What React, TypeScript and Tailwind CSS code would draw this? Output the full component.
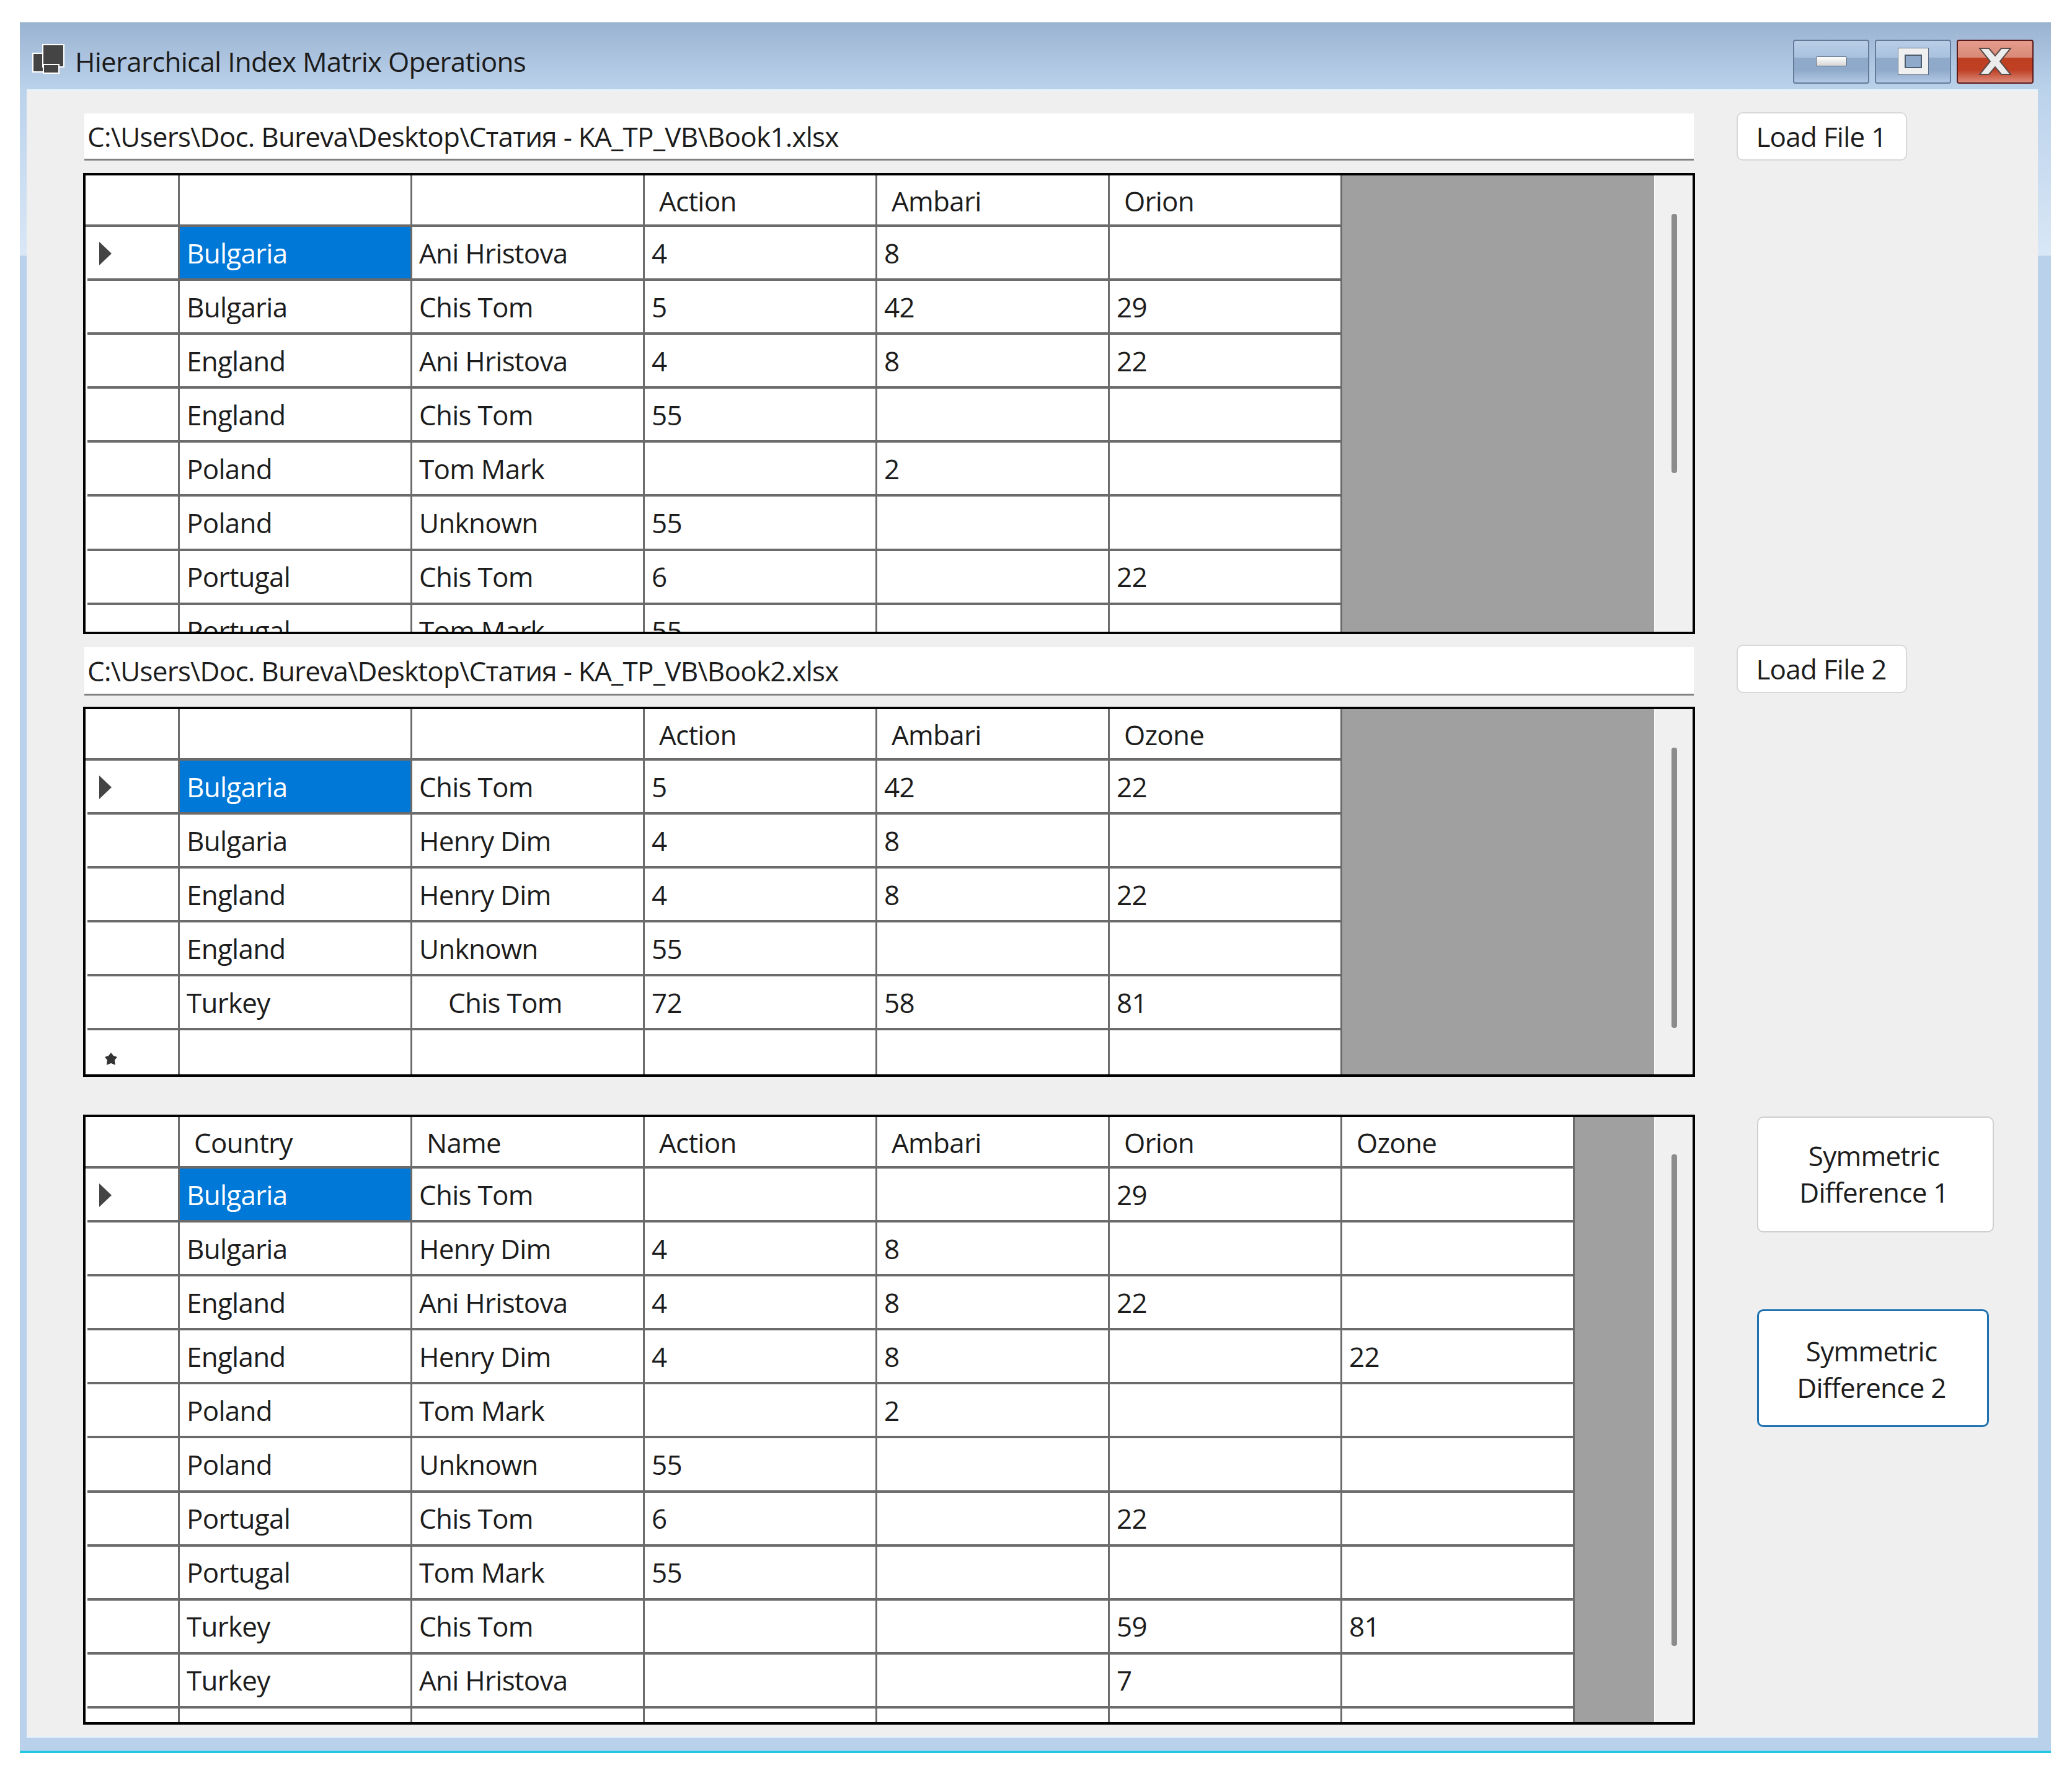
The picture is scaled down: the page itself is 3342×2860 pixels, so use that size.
const rowH = "h-[87.1px]";

type GridProps = {
  headers: string[];
  rows: string[][];
  height: string;
  thumbTop: string;
  thumbHeight: string;
  newRow?: boolean;
};

function DataGrid({ headers, rows, height, thumbTop, thumbHeight, newRow }: GridProps) {
  return (
    <div className={`flex w-[2600px] overflow-hidden border-4 border-black bg-white ${height}`}>
      <div className="flex flex-col shrink-0">
        <div className="flex h-[83px] shrink-0">
          <div className="w-[152px] shrink-0 border-r-[3px] border-b-4 border-[#6b6b6b]" />
          {headers.map((h, i) => (
            <div
              key={i}
              className="flex w-[375px] shrink-0 items-center border-r-[3px] border-b-4 border-[#6b6b6b] pt-[3px] pl-[23px]"
            >
              {h}
            </div>
          ))}
        </div>
        {rows.map((row, r) => (
          <div key={r} className={`flex shrink-0 ${rowH}`}>
            <div className="w-[152px] shrink-0 pl-[3px]">
              <div className="flex h-full items-center border-r-[3px] border-b-4 border-[#6b6b6b] pt-[3px] pl-[19px]">
                {r === 0 && (
                  <svg width="20" height="38" viewBox="0 0 20 38">
                    <polygon points="0,0 20,19 0,38" fill="#444444" />
                  </svg>
                )}
              </div>
            </div>
            {row.map((c, i) => (
              <div
                key={i}
                className={
                  r === 0 && i === 0
                    ? "flex w-[375px] shrink-0 items-center border-r-[3px] border-b-4 border-[#6b6b6b] bg-[#0078d7] pl-[11px] text-white"
                    : c === "Chis Tom "
                    ? "flex w-[375px] shrink-0 items-center border-r-[3px] border-b-4 border-[#6b6b6b] pl-[58px]"
                    : "flex w-[375px] shrink-0 items-center border-r-[3px] border-b-4 border-[#6b6b6b] pl-[11px]"
                }
              >
                {c}
              </div>
            ))}
          </div>
        ))}
        {newRow && (
          <div className={`flex shrink-0 ${rowH}`}>
            <div className="w-[152px] shrink-0 pl-[3px]">
              <div className="flex h-full items-center border-r-[3px] border-[#6b6b6b] pt-[4px] pl-[28px]">
                <svg width="20" height="20" viewBox="0 0 20 20">
                  <polygon points="10,0 14,5 20,7 16,12 17,20 10,17 3,20 4,12 0,7 6,5" fill="#333333" />
                </svg>
              </div>
            </div>
            {headers.map((_, i) => (
              <div key={i} className="w-[375px] shrink-0 border-r-[3px] border-[#6b6b6b]" />
            ))}
          </div>
        )}
      </div>
      <div className="flex-1 bg-[#a0a0a0]" />
      <div className="w-[62px] shrink-0 border-l-2 border-[#f8f8f8] bg-[#f0f0f0]">
        <div className={`ml-[26px] w-[9px] rounded-sm bg-[#8c8c8c] ${thumbTop} ${thumbHeight}`} />
      </div>
    </div>
  );
}

function PathBox({ text, cls }: { text: string; cls: string }) {
  return (
    <div className={`ml-[2px] flex w-[2596px] items-center self-end border-b-[3px] border-[#808080] bg-white pl-[5px] ${cls}`}>
      {text}
    </div>
  );
}

function LoadButton({ label }: { label: string }) {
  return (
    <div className="ml-[69px] flex h-[78px] w-[275px] items-center justify-center self-start rounded-[10px] border-2 border-[#d8d8d8] bg-white pr-[2px]">
      {label}
    </div>
  );
}

const capGlass =
  "bg-[linear-gradient(to_bottom,#b9cee6_0%,#a9c1de_40%,#8ea9c9_41%,#8fa9ca_70%,#b2c9e4_100%)]";

export default function App() {
  const g1 = [
    ["Bulgaria", "Ani Hristova", "4", "8", ""],
    ["Bulgaria", "Chis Tom", "5", "42", "29"],
    ["England", "Ani Hristova", "4", "8", "22"],
    ["England", "Chis Tom", "55", "", ""],
    ["Poland", "Tom Mark", "", "2", ""],
    ["Poland", "Unknown", "55", "", ""],
    ["Portugal", "Chis Tom", "6", "", "22"],
    ["Portugal", "Tom Mark", "55", "", ""],
  ];
  const g2 = [
    ["Bulgaria", "Chis Tom", "5", "42", "22"],
    ["Bulgaria", "Henry Dim", "4", "8", ""],
    ["England", "Henry Dim", "4", "8", "22"],
    ["England", "Unknown", "55", "", ""],
    ["Turkey", "Chis Tom ", "72", "58", "81"],
  ];
  const g3 = [
    ["Bulgaria", "Chis Tom", "", "", "29", ""],
    ["Bulgaria", "Henry Dim", "4", "8", "", ""],
    ["England", "Ani Hristova", "4", "8", "22", ""],
    ["England", "Henry Dim", "4", "8", "", "22"],
    ["Poland", "Tom Mark", "", "2", "", ""],
    ["Poland", "Unknown", "55", "", "", ""],
    ["Portugal", "Chis Tom", "6", "", "22", ""],
    ["Portugal", "Tom Mark", "55", "", "", ""],
    ["Turkey", "Chis Tom", "", "", "59", "81"],
    ["Turkey", "Ani Hristova", "", "", "7", ""],
    ["", "", "", "", "", ""],
  ];
  const textCls = "font-['Open_Sans',sans-serif] text-[44px] tracking-[-0.75px] text-[#1c1c1c]";
  return (
    <div className={`h-[2860px] w-[3342px] bg-white pt-[36px] pl-[32px] ${textCls}`}>
      <div className="flex h-[2792px] w-[3276px] flex-col border-b-4 border-[#1fc8e3] bg-[linear-gradient(to_bottom,#9ab3d1_0,#bbd2eb_108px,#d9e7f6_376px,#b9d1ea_377px)]">
        <div className="flex h-[108px] shrink-0 items-center pt-[18px] pl-[20px]">
          <svg width="52" height="48" viewBox="0 0 52 48" className="-mt-[8px] shrink-0">
            <rect x="1" y="15" width="17" height="30" fill="#444444" stroke="#ffffff" strokeWidth="2" />
            <rect x="17" y="1" width="34" height="36" fill="#444444" stroke="#ffffff" strokeWidth="2" />
            <rect x="18" y="33" width="25" height="14" fill="#444444" stroke="#ffffff" strokeWidth="2" />
          </svg>
          <div className="ml-[17px]">Hierarchical Index Matrix Operations</div>
          <div className="ml-auto mr-[28px] flex gap-[9px]">
            <div className={`flex h-[71px] w-[123px] items-center justify-center rounded-[4px] border-2 border-[#647a98] ${capGlass}`}>
              <div className="h-[16px] w-[50px] rounded-[2px] border border-[#5a6a80] bg-[linear-gradient(to_bottom,#ffffff,#d6d6d6)]" />
            </div>
            <div className={`flex h-[71px] w-[123px] items-center justify-center rounded-[4px] border-2 border-[#647a98] ${capGlass}`}>
              <div className="h-[44px] w-[50px] border-[1px] border-[#5a6a80] bg-[#f0f0f0] p-[10px]">
                <div className="h-full w-full border-[2px] border-[#4e5c70] bg-[#8ea9c9]" />
              </div>
            </div>
            <div className="flex h-[71px] w-[124px] items-center justify-center rounded-[4px] border-2 border-[#5a1a1a] bg-[linear-gradient(to_bottom,#e59c8c_0%,#d98a78_40%,#bf3f22_41%,#bf4024_70%,#dd8b7a_100%)]">
              <svg width="54" height="46" viewBox="0 0 54 46">
                <polygon
                  points="2,2 17,2 27,14 37,2 52,2 35,23 52,44 37,44 27,32 17,44 2,44 19,23"
                  fill="#ececec"
                  stroke="#5a4a48"
                  strokeWidth="2"
                />
              </svg>
            </div>
          </div>
        </div>
        <div className="ml-[11px] flex h-[2659px] w-[3244px] shrink-0 flex-col border-y-[3px] border-[#e8f2fb] bg-[#efefef] pt-[34px] pl-[91px]">
          <div className="flex h-[78px]">
            <PathBox text="C:\Users\Doc. Bureva\Desktop\Статия - KA_TP_VB\Book1.xlsx" cls="h-[76px]" />
            <LoadButton label="Load File 1" />
          </div>
          <div className="mt-[20px]">
            <DataGrid headers={["", "", "Action", "Ambari", "Orion"]} rows={g1} height="h-[744px]" thumbTop="mt-[62px]" thumbHeight="h-[418px]" />
          </div>
          <div className="mt-[17px] flex h-[82px]">
            <PathBox text="C:\Users\Doc. Bureva\Desktop\Статия - KA_TP_VB\Book2.xlsx" cls="h-[78px]" />
            <LoadButton label="Load File 2" />
          </div>
          <div className="mt-[18px]">
            <DataGrid headers={["", "", "Action", "Ambari", "Ozone"]} rows={g2} height="h-[597px]" thumbTop="mt-[62px]" thumbHeight="h-[452px]" newRow />
          </div>
          <div className="mt-[61px] flex">
            <DataGrid
              headers={["Country", "Name", "Action", "Ambari", "Orion", "Ozone"]}
              rows={g3}
              height="h-[984px]"
              thumbTop="mt-[60px]"
              thumbHeight="h-[793px]"
            />
            <div className="flex flex-col pl-[100px] pt-[3px] text-center">
              <div className="flex h-[187px] w-[382px] items-center justify-center rounded-[10px] border-2 border-[#cfcfcf] bg-white pr-[5px] pb-[1px] leading-[59px]">
                Symmetric<br />Difference 1
              </div>
              <div className="mt-[124px] flex h-[190px] w-[374px] items-center justify-center rounded-[10px] border-[3px] border-[#1f72b0] bg-white pt-[3px] pr-[5px] leading-[59px]">
                Symmetric<br />Difference 2
              </div>
            </div>
          </div>
        </div>
      </div>
    </div>
  );
}
